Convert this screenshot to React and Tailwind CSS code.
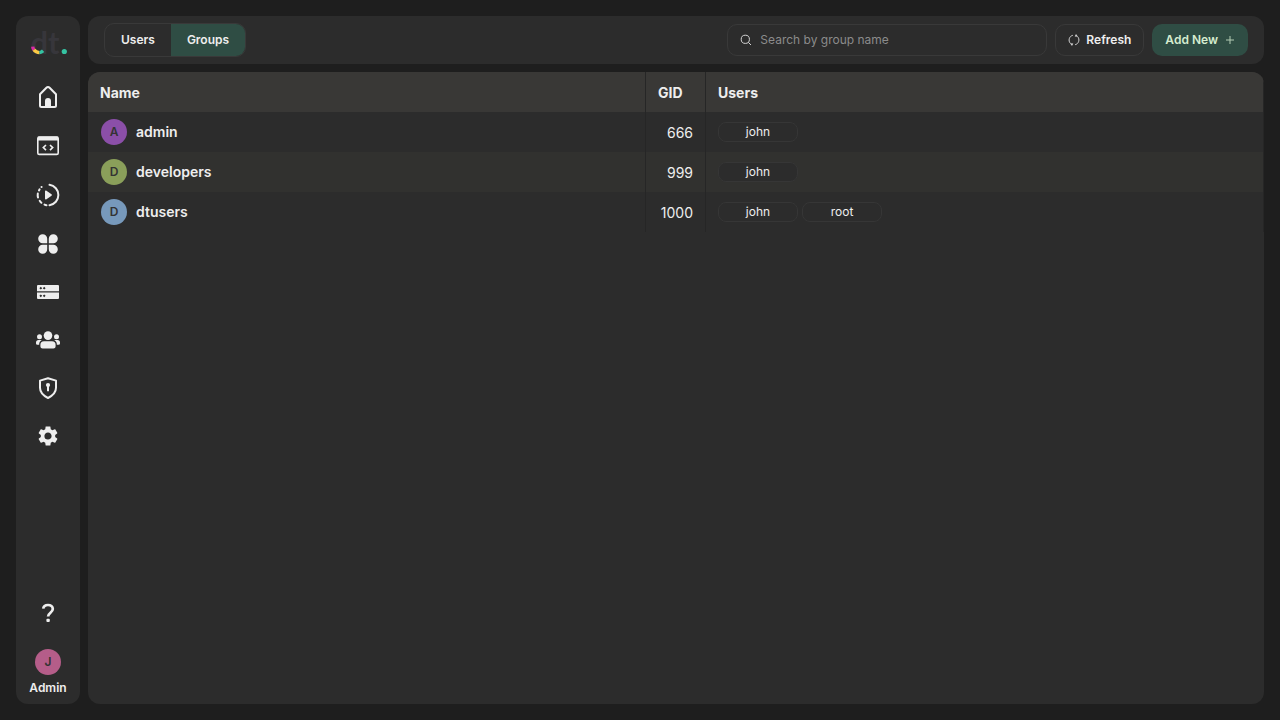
import React, { useState } from "react";

function Logo() {
  return (
    <svg viewBox="0 0 40 40" className="size-10" role="img" aria-label="dt.">
      <text x="2.5" y="30" fontFamily="Lato, sans-serif" fontSize="31" fontWeight="700" fill="#37363b">
        dt
      </text>
      <g fill="none" strokeWidth="3.4">
        <path d="M4.7 22.6a7 7 0 0 0 1.2 3.200" stroke="#d92ba4" />
        <path d="M5.900 25.800a7 7 0 0 0 5.600 2.800" stroke="#fbc944" />
        <path d="M11.500 28.600a7 7 0 0 0 3.600-1.800" stroke="#35c3a2" />
      </g>
      <circle cx="36.3" cy="27.500" r="2.600" fill="#35c3a2" />
    </svg>
  );
}

function Svg({ children }) {
  return (
    <svg viewBox="0 0 24 24" className="size-6" fill="currentColor" aria-hidden="true">
      {children}
    </svg>
  );
}

const HomeIcon = () => (
  <Svg>
    <path d="M4 9.2 10.4 2.7a2.2 2.2 0 0 1 3.2 0L20 9.2V20.5a1.500 1.500 0 0 1-1.500 1.500h-13A1.500 1.500 0 0 1 4 20.500Z" fill="none" stroke="currentColor" strokeWidth="2" strokeLinejoin="round" />
    <path d="M9 22v-6a3 3 0 0 1 6 0v6Z" />
  </Svg>
);

const CodeIcon = () => (
  <Svg>
    <rect x="1.8" y="3" width="20.4" height="17.4" rx="1.5" fill="none" stroke="currentColor" strokeWidth="1.6" />
    <path d="M2 2.6h20V6.5H2Z" />
    <path d="m10 11-2.7 2.6L10 16.2M14 11l2.7 2.6L14 16.2" fill="none" stroke="currentColor" strokeWidth="1.6" />
  </Svg>
);

const ProcessIcon = () => (
  <Svg>
    <g fill="none" stroke="currentColor" strokeWidth="2" strokeLinecap="round">
      <path d="M13.5 1.8a10.3 10.3 0 0 1 0 20.4" />
      <path d="M10.5 22.2a10.3 10.3 0 0 1-2-.6M5.4 19.8a10 10 0 0 1-1.7-2M2 14.6a10.3 10.3 0 0 1-.2-4M3 7.4l.6-1.1M5.5 4.1h.1" />
    </g>
    <path d="M9 8.2v7.6c0 .6.6.9 1.1.6l5.4-3.7c.5-.3.5-1 0-1.4l-5.4-3.7c-.5-.3-1.1 0-1.1.6Z" />
  </Svg>
);

const AppsIcon = () => (
  <Svg>
    <path d="M11.2 11.2H6.8a4.5 4.5 0 1 1 4.4-4.5Z" />
    <path d="M12.8 11.2h4.4a4.5 4.5 0 1 0-4.4-4.5Z" />
    <path d="M11.2 12.8H6.8a4.5 4.5 0 1 0 4.4 4.5Z" />
    <path d="M12.8 12.8h4.4a4.5 4.5 0 1 1-4.4 4.5Z" />
  </Svg>
);

const StorageIcon = () => (
  <Svg>
    <path fillRule="evenodd" d="M2 5h20a1 1 0 0 1 1 1v5.2H1V6a1 1 0 0 1 1-1Zm1.4 3.2 1.4 1.4 1.4-1.4-1.4-1.4Zm3.4 0 1.4 1.4 1.4-1.4-1.4-1.4Z" />
    <path fillRule="evenodd" d="M1 12.6h22V18a1 1 0 0 1-1 1H2a1 1 0 0 1-1-1Zm2.4 3.2 1.4 1.4 1.4-1.4-1.4-1.4Zm3.4 0 1.4 1.4 1.4-1.4-1.4-1.4Z" />
  </Svg>
);

const UsersIcon = () => (
  <Svg>
    <circle cx="12" cy="7.6" r="4.3" />
    <circle cx="3.5" cy="8.7" r="2.5" />
    <circle cx="20.5" cy="8.7" r="2.5" />
    <path d="M8 13.2h8a3.6 3.6 0 0 1 3.6 3.6v1.5c0 1.4-1 2.2-2.2 2.2H6.6c-1.2 0-2.2-.8-2.2-2.2v-1.5A3.6 3.6 0 0 1 8 13.2Z" />
    <path d="M2.6 12h3.2A5 5 0 0 0 3.2 16.8H1.4A1.4 1.4 0 0 1 0 15.4v-.8A2.6 2.6 0 0 1 2.6 12ZM21.4 12h-3.2a5 5 0 0 1 2.6 4.8h1.8a1.4 1.4 0 0 0 1.4-1.4v-.8A2.6 2.6 0 0 0 21.4 12Z" />
  </Svg>
);

const ShieldIcon = () => (
  <Svg>
    <path d="M12 2.2 20 4.6v7.2c0 5.2-3.6 8-8 10.2-4.4-2.2-8-5-8-10.2V4.6Z" fill="none" stroke="currentColor" strokeWidth="2" strokeLinejoin="round" />
    <circle cx="12" cy="9" r="2.1" />
    <path d="M11 9h2v6.2h-2Z" />
  </Svg>
);

const SettingsIcon = () => (
  <Svg>
    <path d="M19.14 12.94c.04-.3.06-.61.06-.94 0-.32-.02-.64-.07-.94l2.03-1.58c.18-.14.23-.41.12-.61l-1.92-3.32c-.12-.22-.37-.29-.59-.22l-2.39.96c-.5-.38-1.03-.7-1.62-.94l-.36-2.54c-.04-.24-.24-.41-.48-.41h-3.84c-.24 0-.43.17-.47.41l-.36 2.54c-.59.24-1.13.57-1.62.94l-2.39-.96c-.22-.08-.47 0-.59.22L2.74 8.87c-.12.21-.08.47.12.61l2.03 1.58c-.05.3-.09.63-.09.94s.02.64.07.94l-2.03 1.58c-.18.14-.23.41-.12.61l1.92 3.32c.12.22.37.29.59.22l2.39-.96c.5.38 1.03.7 1.62.94l.36 2.54c.05.24.24.41.48.41h3.84c.24 0 .44-.17.47-.41l.36-2.54c.59-.24 1.13-.56 1.62-.94l2.39.96c.22.08.47 0 .59-.22l1.92-3.32c.12-.22.07-.47-.12-.61l-2.01-1.58ZM12 15.6A3.61 3.61 0 0 1 8.4 12c0-1.98 1.62-3.6 3.6-3.6s3.6 1.62 3.6 3.6-1.62 3.6-3.6 3.6Z" />
  </Svg>
);

const HelpIcon = () => (
  <Svg>
    <path d="M7.2 7.7C7.5 5.4 9.5 4 12 4c2.7 0 4.8 1.6 4.8 4.1 0 3.6-4.7 3.7-4.7 7.4" fill="none" stroke="currentColor" strokeWidth="2.7" />
    <rect x="10.4" y="17.7" width="3.4" height="3.4" rx="1" />
  </Svg>
);

const SearchIcon = () => (
  <svg viewBox="0 0 12 12" className="size-3 shrink-0 text-[#d4d4d4]" fill="none" stroke="currentColor" aria-hidden="true">
    <circle cx="5.3" cy="5.3" r="4.1" />
    <path d="m8.3 8.3 2.7 2.7" />
  </svg>
);

const RefreshIcon = () => (
  <svg viewBox="0 0 12 12" className="size-3 shrink-0 text-[#d4d4d4]" aria-hidden="true">
    <g fill="none" stroke="currentColor">
      <path d="M4.8 1.3A4.9 4.9 0 0 0 2.4 9.4M7.2 10.7A4.9 4.9 0 0 0 9.6 2.6" />
    </g>
    <path d="M2 9.2 5.3 9.4 4 12ZM10 2.8 6.7 2.6 8 0Z" fill="currentColor" />
  </svg>
);

const PlusIcon = () => (
  <svg viewBox="0 0 10 10" className="size-2.5 shrink-0" fill="none" stroke="currentColor" opacity="0.8" aria-hidden="true">
    <path d="M5 1v8M1 5h8" />
  </svg>
);

const mainNav = [
  { label: "Home", Icon: HomeIcon },
  { label: "Code", Icon: CodeIcon },
  { label: "Processes", Icon: ProcessIcon },
  { label: "Apps", Icon: AppsIcon },
];

const systemNav = [
  { label: "Storage", Icon: StorageIcon },
  { label: "Users and groups", Icon: UsersIcon },
  { label: "Security", Icon: ShieldIcon },
  { label: "Settings", Icon: SettingsIcon },
];

const groups = [
  { name: "admin", gid: 666, users: ["john"], color: "bg-[#8b4fa8]" },
  { name: "developers", gid: 999, users: ["john"], color: "bg-[#8a9f5a]" },
  { name: "dtusers", gid: 1000, users: ["john", "root"], color: "bg-[#7799bb]" },
];

function Avatar({ letter, color }) {
  return (
    <span className={`flex size-[26px] shrink-0 items-center justify-center rounded-full text-xs font-semibold text-[#333] ${color}`}>
      {letter}
    </span>
  );
}

function Sidebar() {
  return (
    <aside className="flex w-16 shrink-0 flex-col items-center rounded-xl bg-[#2c2c2c] py-2">
      <Logo />
      <nav className="mt-2 flex flex-col">
        {mainNav.map(({ label, Icon }) => (
          <a key={label} href="#" aria-label={label} className="flex h-[49px] w-16 items-center justify-center">
            <Icon />
          </a>
        ))}
        {systemNav.map(({ label, Icon }) => (
          <a key={label} href="#" aria-label={label} className="flex h-12 w-16 items-center justify-center">
            <Icon />
          </a>
        ))}
      </nav>
      <a href="#" aria-label="Help" className="mt-auto mb-6">
        <HelpIcon />
      </a>
      <button type="button" className="flex flex-col items-center gap-[5px] text-xs font-semibold">
        <Avatar letter="J" color="bg-[#b55d89]" />
        <span className="leading-4">Admin</span>
      </button>
    </aside>
  );
}

export default function App() {
  const [query, setQuery] = useState("");
  const rows = groups.filter((g) => g.name.includes(query.toLowerCase()));

  return (
    <div className="flex min-h-screen gap-2 bg-[#1e1e1e] p-4 font-['Inter',sans-serif] text-[#eee]">
      <Sidebar />
      <div className="flex min-w-0 flex-1 flex-col gap-2">
        <header className="flex h-12 items-center gap-2 rounded-xl bg-[#2c2c2c] px-4">
          <div className="mr-auto flex h-[34px] overflow-hidden rounded-[10px] border border-[#393939] text-xs font-semibold">
            <button type="button" className="px-4">Users</button>
            <button type="button" aria-pressed="true" className="bg-[#2f4d44] px-4">Groups</button>
          </div>
          <label className="flex h-8 w-80 items-center gap-2 rounded-[10px] border border-[#393939] px-3">
            <SearchIcon />
            <input
              type="text"
              aria-label="Search by group name"
              placeholder="Search by group name"
              value={query}
              onChange={(e) => setQuery(e.target.value)}
              className="min-w-0 flex-1 bg-transparent text-xs outline-none placeholder:text-[#8b8b8b]"
            />
          </label>
          <button type="button" className="flex h-8 items-center gap-1.5 rounded-[10px] border border-[#393939] px-3 text-xs font-semibold">
            <RefreshIcon />
            Refresh
          </button>
          <button type="button" className="flex h-8 items-center gap-[7px] rounded-[10px] bg-[#2f4d44] px-[13px] text-xs font-semibold text-[#d5eccf]">
            Add New
            <PlusIcon />
          </button>
        </header>
        <main className="flex-1 overflow-hidden rounded-xl bg-[#2c2c2c]">
          <table className="w-full table-fixed border-separate border-spacing-0 text-sm">
            <colgroup>
              <col />
              <col className="w-[60px]" />
              <col className="w-[558px]" />
            </colgroup>
            <thead className="bg-[#393836]">
              <tr className="h-10 text-left">
                <th className="border-r border-[#262626] px-3 pt-0.5 font-bold">Name</th>
                <th className="border-r border-[#262626] px-3 pt-0.5 font-bold">GID</th>
                <th className="border-r border-[#262626] px-3 pt-0.5 font-bold">Users</th>
              </tr>
            </thead>
            <tbody>
              {rows.map((g) => (
                <tr key={g.name} className="h-10 even:bg-[#31312f]">
                  <td className="border-r border-[#262626] px-3 font-semibold">
                    <div className="flex items-center gap-[9px] pl-px">
                      <Avatar letter={g.name[0].toUpperCase()} color={g.color} />
                      {g.name}
                    </div>
                  </td>
                  <td className="border-r border-[#262626] px-3 pt-0.5 text-right">{g.gid}</td>
                  <td className="border-r border-[#262626] px-3">
                    <div className="flex gap-1">
                      {g.users.map((u) => (
                        <span key={u} className="flex h-5 w-20 items-center justify-center rounded-lg border border-[#363636] bg-[#2c2c2c] text-xs">
                          {u}
                        </span>
                      ))}
                    </div>
                  </td>
                </tr>
              ))}
            </tbody>
          </table>
        </main>
      </div>
    </div>
  );
}
